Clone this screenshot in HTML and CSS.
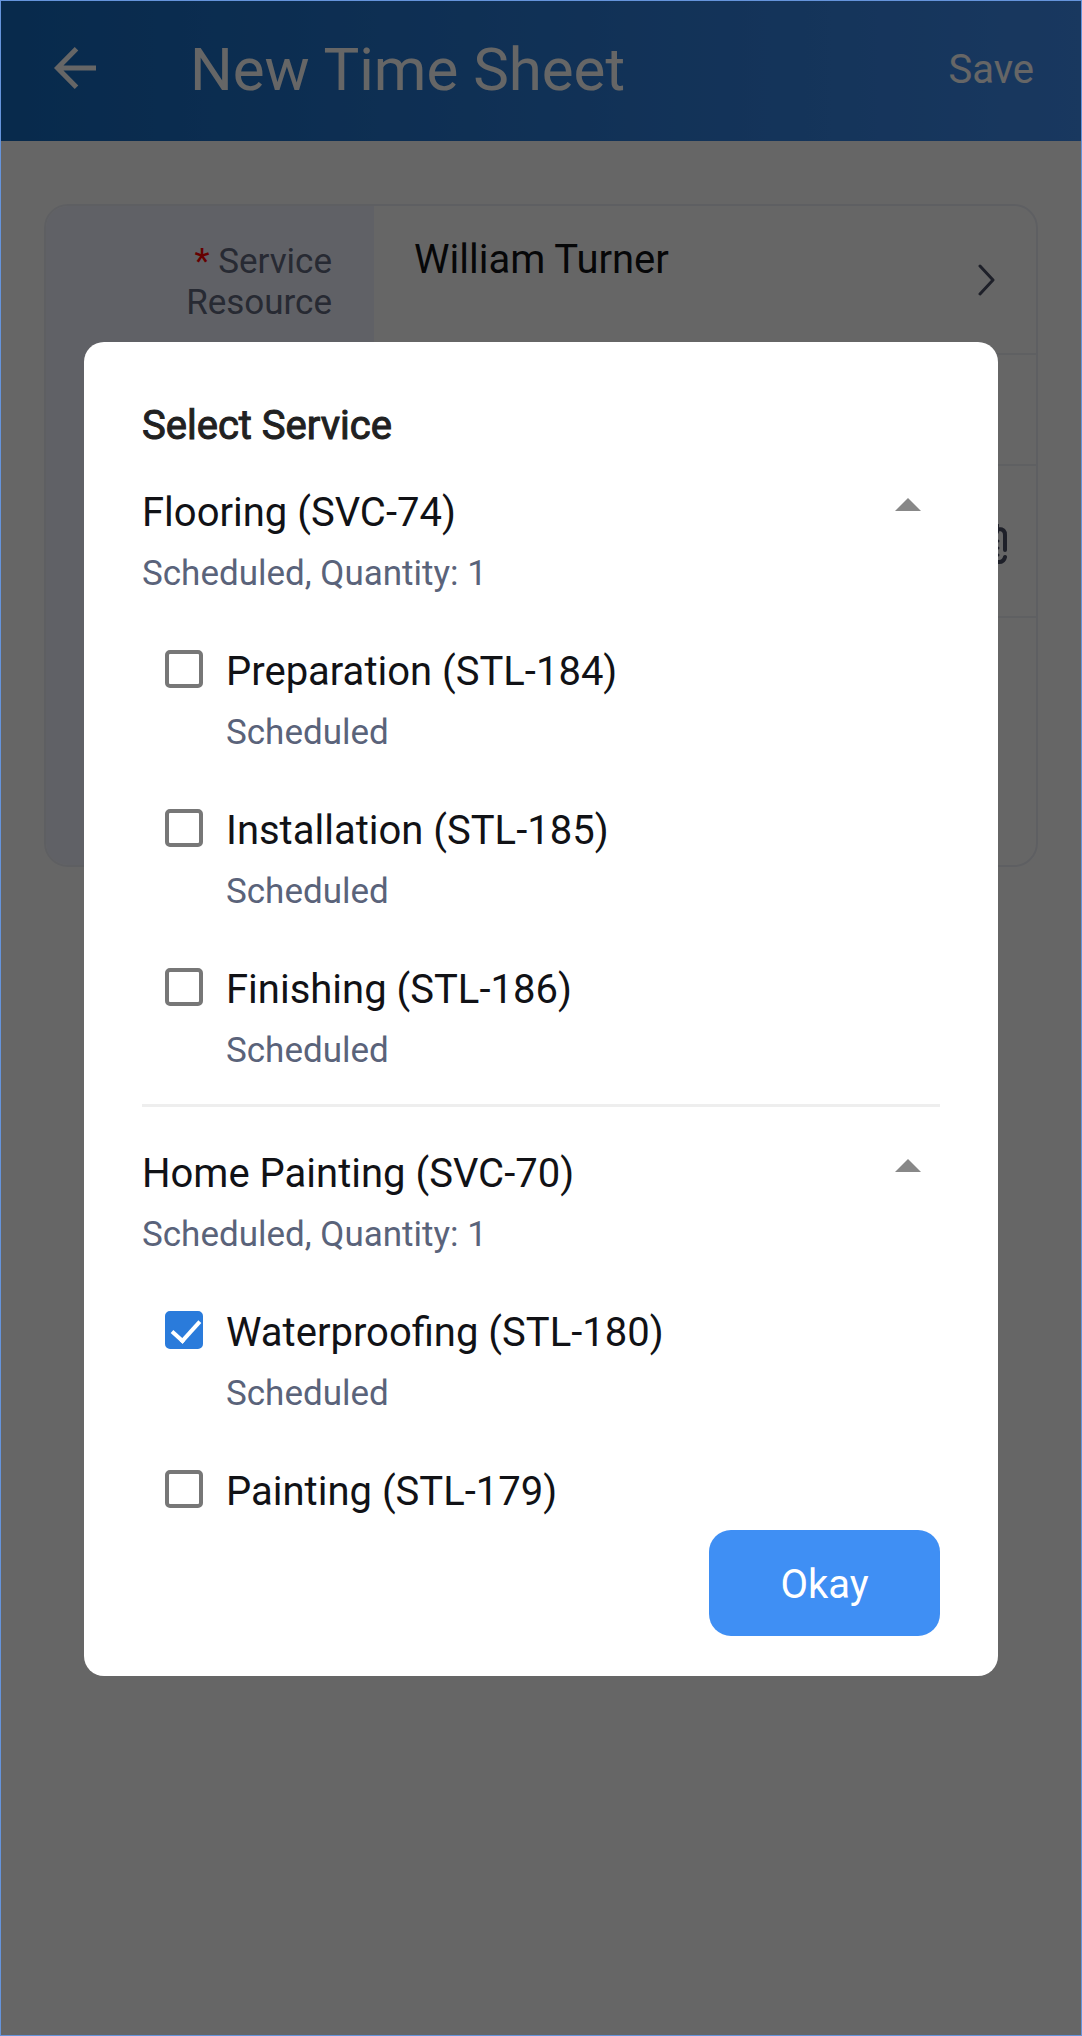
FILE: index.html
```
<!DOCTYPE html>
<html lang="en">
<head>
  <meta charset="UTF-8" />
  <meta name="viewport" content="width=device-width, initial-scale=1" />
  <title>New Time Sheet</title>
  <link rel="stylesheet" href="styles.css">
</head>
<body>

  <div class="screen">
    <header class="topbar">
      <button class="back-btn" aria-label="Back">
        <svg width="42" height="46" viewBox="0 0 42 46" fill="none" stroke="#fff" stroke-width="5">
          <path d="M22.5 1.8L3.5 21l19 19.2M3.5 21H42" />
        </svg>
      </button>
      <h1>New Time Sheet</h1>
      <button class="save-btn">Save</button>
    </header>

    <main>
      <div class="form-card">
        <div class="field">
          <div class="field-label"><span class="required">*</span> Service Resource</div>
          <div class="field-value">
            <span>William Turner</span>
            <svg class="chevron" width="18" height="32" viewBox="0 0 18 32" fill="none" stroke="#4b5066" stroke-width="3" stroke-linecap="round" stroke-linejoin="round">
              <path d="M2 2l13 14L2 30" />
            </svg>
          </div>
        </div>
        <div class="field field-short">
          <div class="field-label"></div>
          <div class="field-value"></div>
        </div>
        <div class="field field-date">
          <div class="field-label"></div>
          <div class="field-value">
            <svg class="calendar" width="36" height="40" viewBox="0 0 36 40" fill="none" stroke="#4b5066" stroke-width="4" stroke-linecap="round">
              <path d="M34 26V11q0-6-6-6H8q-6 0-6 6v21q0 6 6 6h20q5 0 6-5M10 1v7M26 1v7" />
              <path stroke-width="3" d="M9 17h1M17 17h1M26 17h1M9 24h1M17 24h1M26 24h1M9 31h1M17 31h1M26 31h1" />
            </svg>
          </div>
        </div>
        <div class="field field-tall">
          <div class="field-label"></div>
          <div class="field-value"></div>
        </div>
      </div>
    </main>
  </div>

  <div class="overlay">
    <div class="dialog" role="dialog" aria-labelledby="dialogTitle">
      <h2 id="dialogTitle">Select Service</h2>

      <div class="service-list">
        <section class="service">
          <div class="service-head">
            <div class="info">
              <h3>Flooring (SVC-74)</h3>
              <p>Scheduled, Quantity: 1</p>
            </div>
            <button class="toggle" aria-label="Collapse Flooring">
              <svg width="26" height="13" viewBox="0 0 26 13"><path d="M0 13L13 0l13 13z" fill="#888" /></svg>
            </button>
          </div>
          <div class="task">
            <input type="checkbox" id="stl184">
            <label class="info" for="stl184">
              <span class="name">Preparation (STL-184)</span>
              <span class="status">Scheduled</span>
            </label>
          </div>
          <div class="task">
            <input type="checkbox" id="stl185">
            <label class="info" for="stl185">
              <span class="name">Installation (STL-185)</span>
              <span class="status">Scheduled</span>
            </label>
          </div>
          <div class="task">
            <input type="checkbox" id="stl186">
            <label class="info" for="stl186">
              <span class="name">Finishing (STL-186)</span>
              <span class="status">Scheduled</span>
            </label>
          </div>
        </section>

        <section class="service">
          <div class="service-head">
            <div class="info">
              <h3>Home Painting (SVC-70)</h3>
              <p>Scheduled, Quantity: 1</p>
            </div>
            <button class="toggle" aria-label="Collapse Home Painting">
              <svg width="26" height="13" viewBox="0 0 26 13"><path d="M0 13L13 0l13 13z" fill="#888" /></svg>
            </button>
          </div>
          <div class="task">
            <input type="checkbox" id="stl180" checked>
            <label class="info" for="stl180">
              <span class="name">Waterproofing (STL-180)</span>
              <span class="status">Scheduled</span>
            </label>
          </div>
          <div class="task">
            <input type="checkbox" id="stl179">
            <label class="info" for="stl179">
              <span class="name">Painting (STL-179)</span>
            </label>
          </div>
        </section>
      </div>

      <div class="dialog-actions">
        <button class="okay-btn">Okay</button>
      </div>
    </div>
  </div>

</body>
</html>
```
FILE: styles.css
```
* {
  box-sizing: border-box;
}
body {
  margin: 0;
  font-family: Roboto, sans-serif;
  font-size: 40px;
  line-height: 48px;
  color: #111216;
  background: #fff;
}
h1, h2, h3, p {
  margin: 0;
  font-size: 40px;
  font-weight: 400;
}
button {
  font: inherit;
  border: none;
  background: none;
  padding: 0;
  cursor: pointer;
}

.screen {
  min-height: 100vh;
  padding: 1px;
}
.topbar {
  display: flex;
  align-items: center;
  height: 140px;
  padding: 0 47px 2px 53px;
  color: #fff;
  background: linear-gradient(90deg, #1469be, #3f8cee);
}
.back-btn {
  display: flex;
}
.topbar h1 {
  flex: 1;
  margin-left: 94px;
  font-size: 60px;
  line-height: 68px;
}
.save-btn {
  color: #fff;
}

main {
  padding: 63px 43px;
}
.form-card {
  border: 2px solid #eceef6;
  border-radius: 24px;
  overflow: hidden;
}
.field {
  display: flex;
}
.field-label {
  width: 328px;
  padding: 35px 42px 32px 60px;
  background: #f0f2fe;
  color: #636980;
  font-size: 35px;
  line-height: 41px;
  text-align: right;
}
.required {
  color: #f00;
}
.field-value {
  flex: 1;
  display: flex;
  justify-content: space-between;
  padding: 30px 40px;
  border-bottom: 2px solid #eeeff5;
}
.field:last-child .field-value {
  border-bottom: none;
}
.chevron, .calendar {
  align-self: center;
}
.calendar {
  margin: 6px -11px 0 auto;
}
.field-short {
  min-height: 111px;
}
.field-date {
  min-height: 152px;
}
.field-tall {
  min-height: 247px;
}

/* Dialog */
.overlay {
  position: fixed;
  inset: 0;
  display: flex;
  align-items: flex-start;
  padding: 341px 83px 359px;
  border: 1px solid #6594dc;
  background: rgba(0, 0, 0, 0.6);
}
.dialog {
  display: flex;
  flex-direction: column;
  width: 100%;
  max-height: 100%;
  padding: 60px 58px 40px;
  border-radius: 20px;
  background: #fff;
}
.dialog h2 {
  margin-bottom: 39px;
  color: #212121;
  -webkit-text-stroke: 1px #212121;
}
.service-list {
  flex: 1;
  min-height: 0;
  overflow-y: auto;
  scrollbar-width: none;
}
.service + .service {
  margin-top: 32px;
  padding-top: 43px;
  border-top: 3px solid #eee;
}
.service-head {
  display: flex;
  justify-content: space-between;
}
.info {
  display: flex;
  flex-direction: column;
  gap: 16px;
}
.service-head p, .status {
  color: #5a637a;
  font-size: 35px;
  line-height: 42px;
}
.toggle {
  display: flex;
  align-self: flex-start;
  padding: 9px 19px;
}
.task {
  display: flex;
  gap: 23px;
  min-height: 106px;
  margin-top: 53px;
  padding-left: 23px;
}
.task input {
  appearance: none;
  position: relative;
  width: 38px;
  height: 38px;
  margin: 2px 0 0;
  border: 4px solid #777;
  border-radius: 5px;
}
.task input:checked {
  border-color: #2a7bdb;
  background: #2a7bdb;
}
.task input:checked::after {
  content: "";
  position: absolute;
  left: 9px;
  top: -1px;
  width: 12px;
  height: 24px;
  border: solid #fff;
  border-width: 0 4px 4px 0;
  transform: rotate(42deg);
}
.dialog-actions {
  display: flex;
  justify-content: flex-end;
}
.okay-btn {
  width: 231px;
  padding: 31px 0 27px;
  border-radius: 22px;
  background: #3f8ff4;
  color: #fff;
}
```
